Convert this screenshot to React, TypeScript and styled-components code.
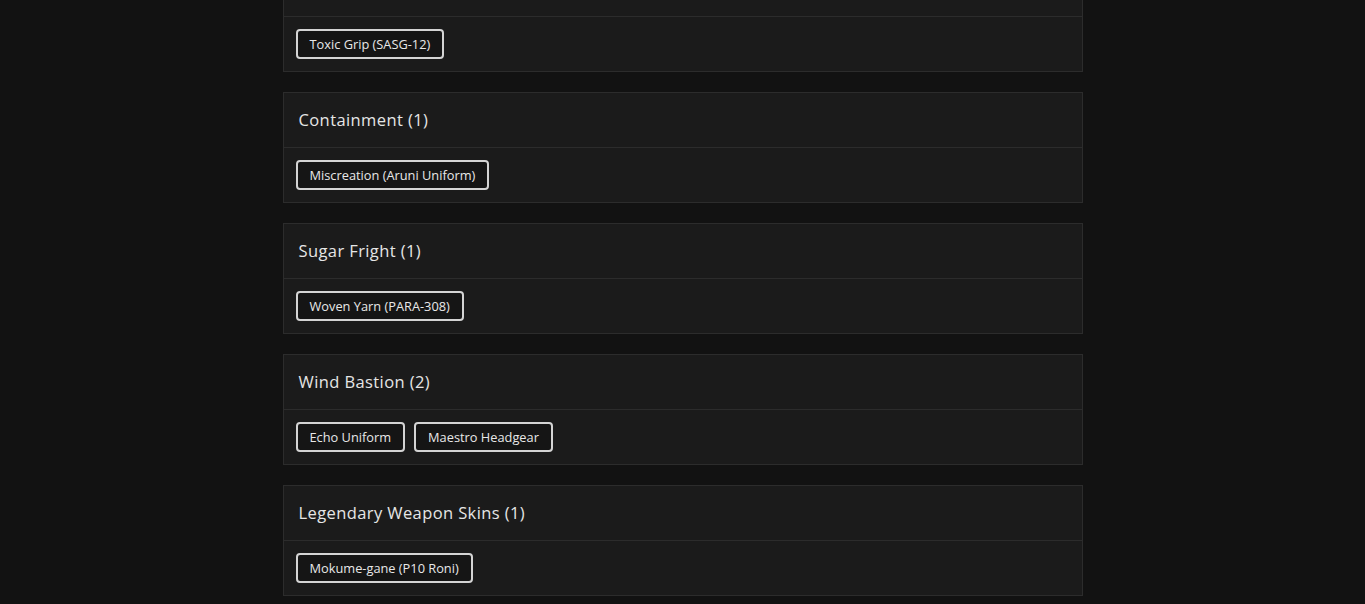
import React from 'react';
import styled, { createGlobalStyle } from 'styled-components';

const GlobalStyle = createGlobalStyle`
    html, body {
        margin: 0;
        padding: 0;
        background: #121212;
        overflow: hidden;
    }
    body {
        font-family: "Open Sans", "Liberation Sans", sans-serif;
    }
`;

// page is shown scrolled a little: the first card's header sits above the top edge
const StyledPage = styled.main`
    width: 800px;
    margin: -39px auto 0 auto;
    display: flex;
    flex-direction: column;
    gap: 20px;
`;

const StyledCard = styled.section`
    background: #1b1b1b;
    border: 1px solid #2c2c2c;
`;

const StyledHeader = styled.header`
    height: 54px;
    display: flex;
    align-items: center;
    padding: 0 15px;
    border-bottom: 1px solid #2c2c2c;
`;

const StyledTitle = styled.h3`
    margin: 0 0 1px 0;
    color: #e6e6e6;
    font-size: 16.5px;
    font-weight: 500;
    letter-spacing: 0.4px;
`;

const StyledBody = styled.div`
    display: flex;
    flex-wrap: wrap;
    gap: 9px;
    padding: 12px 12px;
`;

const StyledItem = styled.button`
    height: 30px;
    padding: 0 12px;
    background: #151515;
    border: 2px solid #d4d4d4;
    border-radius: 4px;
    color: #e8e8e8;
    font-family: inherit;
    font-size: 12.8px;
    cursor: pointer;
`;

const groups = [
    { title: 'Venom Strike', items: ['Toxic Grip (SASG-12)'] },
    { title: 'Containment', items: ['Miscreation (Aruni Uniform)'] },
    { title: 'Sugar Fright', items: ['Woven Yarn (PARA-308)'] },
    { title: 'Wind Bastion', items: ['Echo Uniform', 'Maestro Headgear'] },
    { title: 'Legendary Weapon Skins', items: ['Mokume-gane (P10 Roni)'] },
];

const App = () => {
    return (
        <React.Fragment>
            <GlobalStyle />
            <StyledPage>
                {groups.map((group) => (
                    <StyledCard key={group.title}>
                        <StyledHeader>
                            <StyledTitle>{group.title} ({group.items.length})</StyledTitle>
                        </StyledHeader>
                        <StyledBody>
                            {group.items.map((item) => (
                                <StyledItem key={item}>{item}</StyledItem>
                            ))}
                        </StyledBody>
                    </StyledCard>
                ))}
            </StyledPage>
        </React.Fragment>
    );
};

export default App;
